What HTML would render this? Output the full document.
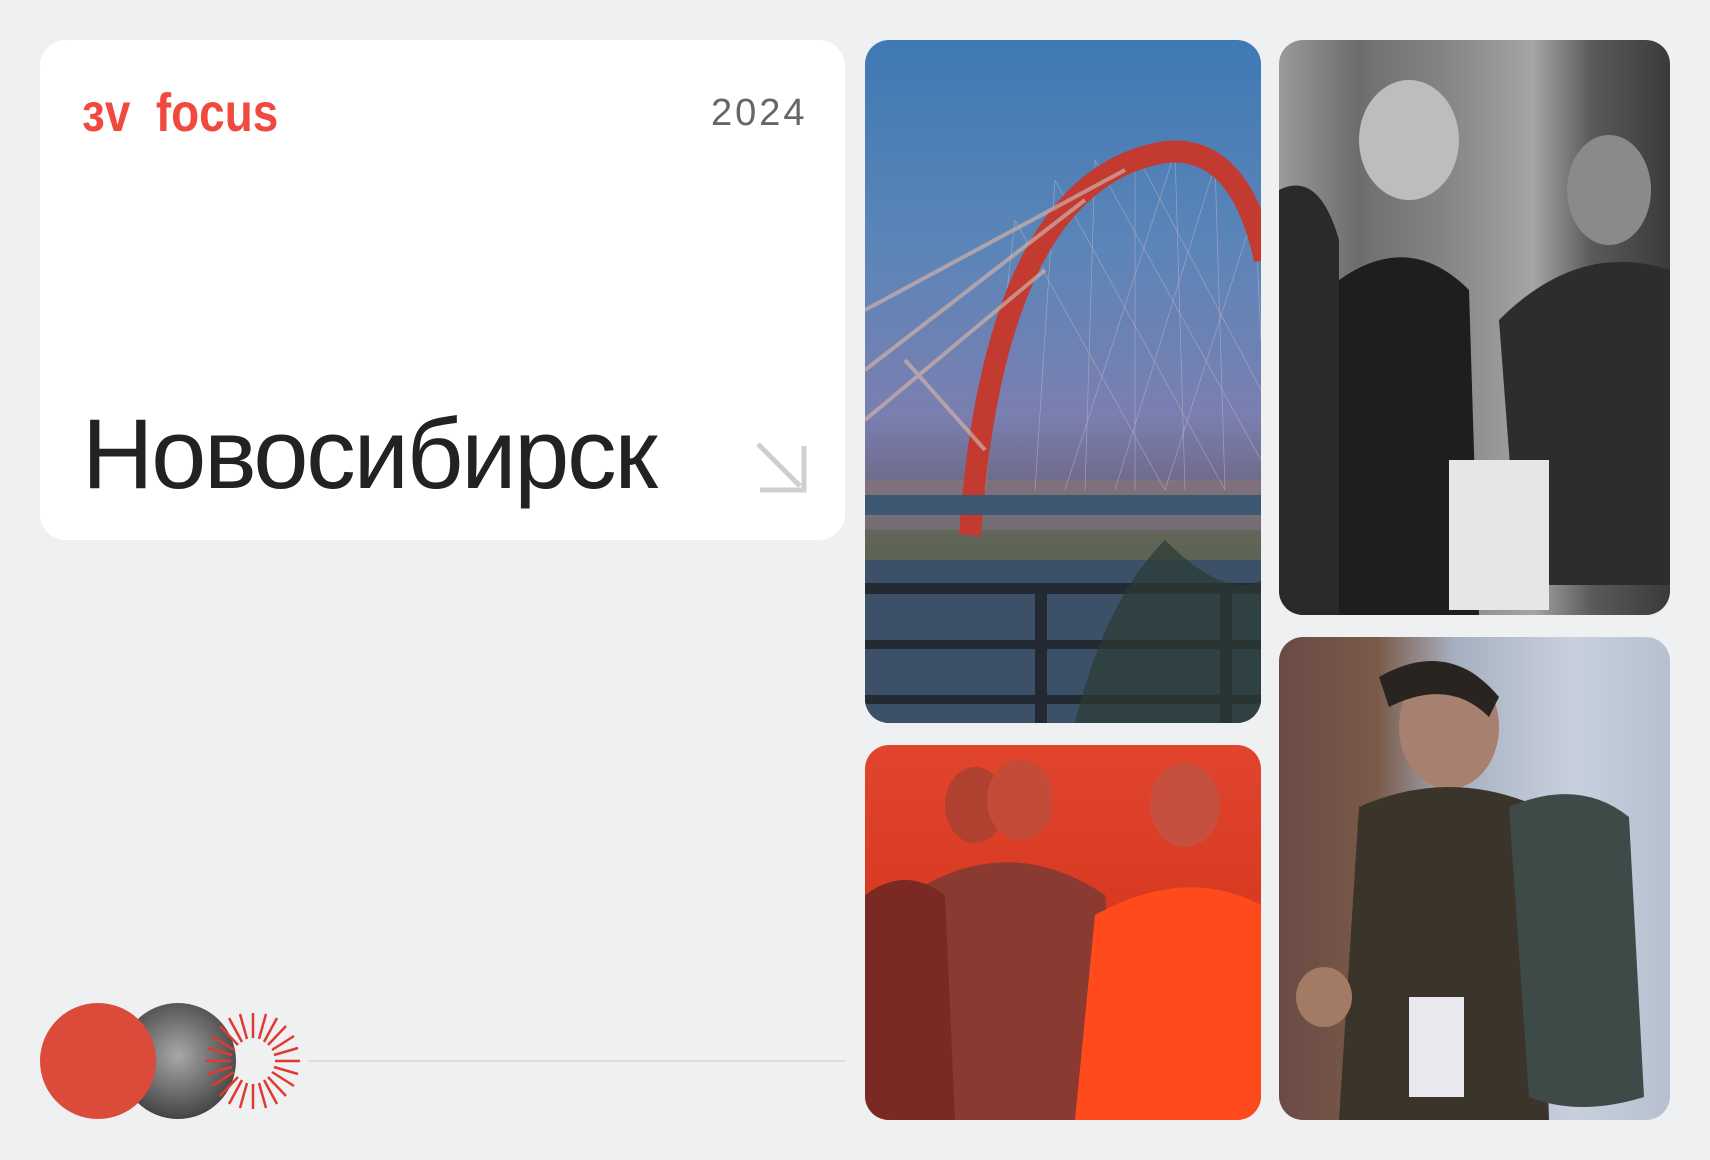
<!DOCTYPE html>
<html><head><meta charset="utf-8">
<style>
*{margin:0;padding:0;box-sizing:border-box}
body{width:1710px;height:1160px;background:#eff0f2;position:relative;overflow:hidden;font-family:"Liberation Sans",sans-serif}
.card{position:absolute;left:40px;top:40px;width:805px;height:500px;background:#fff;border-radius:26px}
.logo{position:absolute;left:82px;top:82px;color:#f04a3e;font-size:54px;font-weight:bold;font-family:"Liberation Sans Narrow","Liberation Sans",sans-serif;transform:scaleX(.85);transform-origin:left}
.year{position:absolute;left:711px;top:92px;color:#666;font-size:38px;letter-spacing:3px}
.city{position:absolute;left:82px;top:397px;color:#222;font-size:99px;letter-spacing:-2.2px;white-space:nowrap}
.ph{position:absolute;border-radius:24px;overflow:hidden}
</style></head><body>
<div class="card"></div>
<div class="logo">ɜv&nbsp;&nbsp;focus</div>
<div class="year">2024</div>
<div class="city">Новосибирск</div>
<svg style="position:absolute;left:754px;top:440px" width="54" height="54" viewBox="0 0 54 54"><path d="M4 4 L46 46 M50 6 V50 H6" stroke="#cfcfcf" stroke-width="5" fill="none"/></svg>

<div class="ph" style="left:865px;top:40px;width:396px;height:683px;background:linear-gradient(#3f79b4 0%,#5b85b8 30%,#7a7fb0 55%,#6f6a8a 65%,#4a5a70 75%,#2c3a4a 100%)">
<svg width="396" height="683" viewBox="0 0 396 683">
<rect x="0" y="440" width="396" height="50" fill="#8f7a70" opacity=".5"/>
<rect x="0" y="490" width="396" height="30" fill="#6a6a45" opacity=".6"/>
<rect x="0" y="520" width="396" height="163" fill="#3c5068"/>
<g stroke="#c9b8c8" stroke-width="0.7" opacity=".6">
<path d="M150 180 L120 450 M190 140 L170 450 M230 120 L220 450 M270 112 L270 450 M310 112 L320 450 M350 125 L360 450 M390 170 L396 300 M150 180 L300 450 M190 140 L360 450 M230 120 L396 420 M270 112 L396 350 M310 112 L200 450 M350 125 L250 450 M390 170 L300 450"/>
</g>
<path d="M105 495 Q130 140 300 112 Q375 104 400 220" stroke="#c23a30" stroke-width="22" fill="none"/>
<path d="M0 330 L220 160 M0 380 L180 230 M40 320 L120 410 M0 270 L260 130" stroke="#d0b0a8" stroke-width="4" opacity=".7"/>
<rect x="0" y="455" width="396" height="20" fill="#3d5870"/>
<g fill="#232a33"><rect x="0" y="543" width="396" height="11"/><rect x="0" y="600" width="396" height="9"/><rect x="0" y="655" width="396" height="9"/><rect x="170" y="543" width="12" height="140"/><rect x="355" y="543" width="12" height="140"/></g>
<path d="M210 683 Q240 560 300 500 Q360 560 396 540 V683Z" fill="#2b3a33" opacity=".7"/>
</svg></div>

<div class="ph" style="left:1279px;top:40px;width:391px;height:575px;background:linear-gradient(90deg,#9a9a9a 0%,#6d6d6d 20%,#888 45%,#a5a5a5 65%,#5a5a5a 80%,#3a3a3a 100%)">
<svg width="391" height="575"><ellipse cx="130" cy="100" rx="50" ry="60" fill="#bdbdbd"/><path d="M60 240 Q130 190 190 250 L200 575 H40Z" fill="#1e1e1e"/><path d="M0 150 Q40 130 60 200 L60 575 H0Z" fill="#2a2a2a"/><ellipse cx="330" cy="150" rx="42" ry="55" fill="#8a8a8a"/><path d="M220 280 Q300 200 391 230 V545 H240Z" fill="#2d2d2d"/><rect x="170" y="420" width="100" height="150" fill="#e6e6e6"/></svg></div>

<div class="ph" style="left:865px;top:745px;width:396px;height:375px;background:linear-gradient(#e2452e,#d83a22 40%,#c8341f)">
<svg width="396" height="375"><ellipse cx="110" cy="60" rx="30" ry="38" fill="#b04030"/><ellipse cx="155" cy="55" rx="33" ry="40" fill="#c24c38"/><path d="M60 140 Q150 90 240 150 L260 375 H40Z" fill="#8a3a30"/><ellipse cx="320" cy="60" rx="35" ry="42" fill="#c55040"/><path d="M230 170 Q320 120 396 160 V375 H210Z" fill="#ff4a1c"/><path d="M0 150 Q40 120 80 150 L90 375 H0Z" fill="#7a2a22"/></svg></div>

<div class="ph" style="left:1279px;top:637px;width:391px;height:483px;background:linear-gradient(90deg,#6a4a45 0%,#7a5a48 25%,#a7b0c0 45%,#c8d0de 75%,#b6c0cf 100%)">
<svg width="391" height="483"><ellipse cx="170" cy="90" rx="50" ry="62" fill="#a78070"/><path d="M100 40 Q170 0 220 60 L210 80 Q170 40 110 70Z" fill="#2a2420"/><path d="M80 170 Q170 130 260 170 L270 483 H60Z" fill="#3b342a"/><path d="M230 170 Q300 140 350 180 L365 460 Q300 480 250 460Z" fill="#3e4a48"/><ellipse cx="45" cy="360" rx="28" ry="30" fill="#a37a64"/><rect x="130" y="360" width="55" height="100" fill="#e8e8ee"/></svg></div>

<svg style="position:absolute;left:30px;top:990px" width="850" height="140">
<defs><radialGradient id="g" cx="50%" cy="45%" r="55%"><stop offset="0" stop-color="#a8a8a8"/><stop offset="1" stop-color="#444"/></radialGradient></defs>
<circle cx="148" cy="71" r="58" fill="url(#g)"/>
<circle cx="68" cy="71" r="58" fill="#dc4a3a"/>
<line x1="278" y1="71" x2="815" y2="71" stroke="#ead0cc" stroke-width="1.5"/>
<g stroke="#e03a30" stroke-width="2.5">
<line x1="245" y1="71" x2="270" y2="71"/><line x1="244" y1="77" x2="268" y2="84"/><line x1="242" y1="82" x2="264" y2="96"/><line x1="238" y1="87" x2="256" y2="106"/><line x1="234" y1="90" x2="247" y2="114"/><line x1="229" y1="93" x2="236" y2="118"/><line x1="223" y1="94" x2="223" y2="119"/><line x1="217" y1="93" x2="210" y2="118"/><line x1="212" y1="90" x2="199" y2="114"/><line x1="208" y1="87" x2="190" y2="106"/><line x1="204" y1="82" x2="182" y2="96"/><line x1="202" y1="77" x2="178" y2="84"/><line x1="201" y1="71" x2="176" y2="71"/><line x1="202" y1="65" x2="178" y2="58"/><line x1="204" y1="60" x2="182" y2="46"/><line x1="208" y1="55" x2="190" y2="36"/><line x1="212" y1="52" x2="199" y2="28"/><line x1="217" y1="49" x2="210" y2="24"/><line x1="223" y1="48" x2="223" y2="23"/><line x1="229" y1="49" x2="236" y2="24"/><line x1="234" y1="52" x2="247" y2="28"/><line x1="238" y1="55" x2="256" y2="36"/><line x1="242" y1="60" x2="264" y2="46"/><line x1="244" y1="65" x2="268" y2="58"/>
</g>
</svg>
</body></html>
